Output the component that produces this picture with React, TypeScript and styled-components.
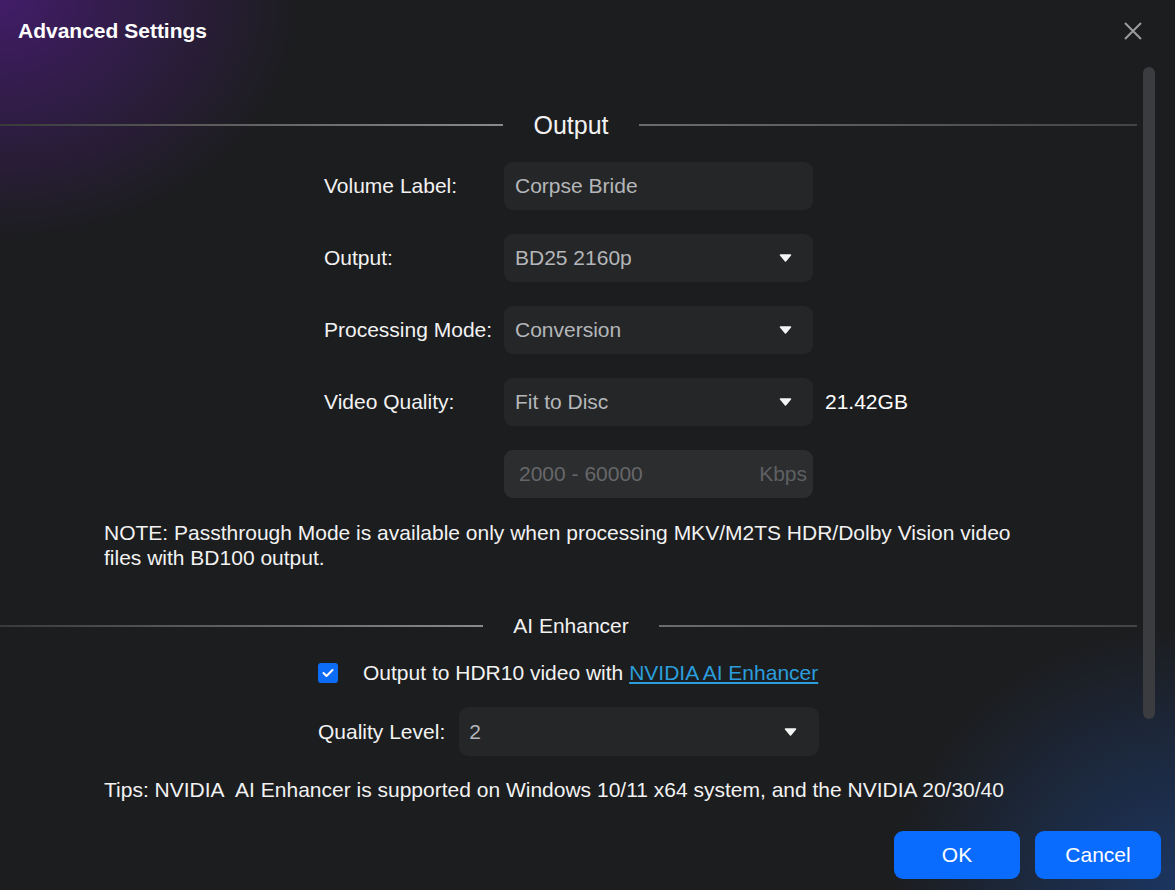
import React from 'react'
import styled, { createGlobalStyle } from 'styled-components'

const GlobalStyle = createGlobalStyle`
  html, body {
    margin: 0;
    padding: 0;
    background: #1c1d1f;
  }
  body {
    font-family: 'Liberation Sans', Arial, sans-serif;
    color: #f2f2f2;
  }
`

const Dialog = styled.div`
  position: relative;
  width: 1175px;
  height: 890px;
  overflow: hidden;
  display: flex;
  flex-direction: column;
  background:
    radial-gradient(ellipse 300px 240px at 0 0, rgba(78, 28, 128, 0.75), rgba(78, 28, 128, 0) 100%),
    radial-gradient(ellipse 280px 260px at 100% 100%, rgba(28, 70, 140, 0.6), rgba(28, 70, 140, 0) 100%),
    #1c1d1f;
`

const Header = styled.div`
  height: 62px;
  flex: none;
  display: flex;
  align-items: center;
  justify-content: space-between;
  padding: 0 30px 0 18px;
`

const Title = styled.h1`
  margin: 0;
  font-size: 21px;
  font-weight: 700;
  color: #ffffff;
`

const CloseButton = styled.button`
  width: 24px;
  height: 24px;
  padding: 0;
  border: 0;
  background: transparent;
  display: flex;
  align-items: center;
  justify-content: center;
  cursor: pointer;
`

const Body = styled.div`
  flex: 1;
  overflow: hidden;
  padding-top: 48px;
  width: 1137px;
  display: flex;
  flex-direction: column;
`

const ScrollThumb = styled.div`
  position: absolute;
  left: 1143px;
  top: 67px;
  width: 12px;
  height: 652px;
  border-radius: 6px;
  background: #3b3c3f;
`

const Divider = styled.div<{ size: number }>`
  display: flex;
  align-items: center;
  gap: 30px;
  height: ${({ size }) => size + 5}px;
  font-size: ${({ size }) => size}px;
  color: #f2f2f2;
  white-space: nowrap;
`

const LineLeft = styled.span`
  flex: 1;
  height: 2px;
  background: linear-gradient(90deg, #3a3a3b, #8a8a8a);
`

const LineRight = styled.span`
  flex: 1;
  height: 2px;
  margin-right: -5px;
  background: linear-gradient(90deg, #6c6c6d, #444446);
`

const Form = styled.div`
  margin: 22px 0 0 324px;
  display: flex;
  flex-direction: column;
  gap: 24px;
`

const Row = styled.div`
  display: grid;
  grid-template-columns: 168px 309px auto;
  column-gap: 12px;
  align-items: center;
  height: 48px;
`

const Label = styled.span`
  font-size: 21px;
  color: #f2f2f2;
  white-space: nowrap;
`

const Field = styled.div<{ disabled?: boolean }>`
  height: 48px;
  box-sizing: border-box;
  border-radius: 9px;
  background: ${({ disabled }) => (disabled ? '#2c2d2f' : '#252628')};
  display: flex;
  align-items: center;
  justify-content: space-between;
  padding: 0 21px 0 11px;
  font-size: 21px;
  color: #b4b6b9;
`

const Placeholder = styled.span`
  margin-left: 4px;
  color: #66676a;
`

const Unit = styled.span`
  color: #5f6063;
  margin-right: -15px;
`

const Extra = styled.span`
  font-size: 21px;
  color: #ffffff;
`

const Arrow = () => (
  <svg width="13" height="8" viewBox="0 0 13 8">
    <path d="M1.5 1h10L6.5 7z" fill="#f4f4f4" stroke="#f4f4f4" strokeWidth="1.5" strokeLinejoin="round" />
  </svg>
)

const Note = styled.p`
  margin: 22px 0 0 104px;
  font-size: 21px;
  line-height: 25px;
  color: #f2f2f2;
`

const AiDivider = styled(Divider)`
  margin-top: 43px;
`

const AiBlock = styled.div`
  margin: 19px 0 0 318px;
  display: flex;
  flex-direction: column;
  gap: 19px;
`

const CheckRow = styled.label`
  display: flex;
  align-items: center;
  gap: 25px;
  height: 30px;
  font-size: 21px;
  color: #f2f2f2;
`

const CheckBox = styled.span`
  width: 20px;
  height: 20px;
  border-radius: 3px;
  background: #0d6cf6;
  display: flex;
  align-items: center;
  justify-content: center;
`

const Link = styled.a`
  color: #2b9ddd;
  text-decoration: underline;
`

const QualityRow = styled.div`
  display: flex;
  align-items: center;
  gap: 14px;
`

const QualitySelect = styled(Field)`
  width: 360px;
  height: 49px;
  padding: 0 22px 0 10px;
`

const Tips = styled.p`
  margin: 21px 0 0 104px;
  font-size: 21px;
  line-height: 25px;
  color: #f2f2f2;
  white-space: nowrap;
`

const Footer = styled.div`
  flex: none;
  display: flex;
  justify-content: flex-end;
  gap: 15px;
  padding: 11px 14px 11px 0;
`

const Button = styled.button`
  width: 126px;
  height: 48px;
  border: 0;
  border-radius: 9px;
  background: #0a6cff;
  color: #ffffff;
  font-family: 'Liberation Sans', Arial, sans-serif;
  font-size: 21px;
  cursor: pointer;
`

const rows = [
  { label: 'Volume Label:', value: 'Corpse Bride', select: false },
  { label: 'Output:', value: 'BD25 2160p', select: true },
  { label: 'Processing Mode:', value: 'Conversion', select: true },
  { label: 'Video Quality:', value: 'Fit to Disc', select: true, extra: '21.42GB' },
]

export default function App() {
  return (
    <>
      <GlobalStyle />
      <Dialog>
        <Header>
          <Title>Advanced Settings</Title>
          <CloseButton aria-label="Close">
            <svg width="20" height="20" viewBox="0 0 20 20">
              <path d="M2 2l16 16M18 2L2 18" stroke="#9c9c9e" strokeWidth="2" />
            </svg>
          </CloseButton>
        </Header>
        <Body>
          <Divider size={25}>
            <LineLeft />
            <span>Output</span>
            <LineRight />
          </Divider>
          <Form>
            {rows.map((r) => (
              <Row key={r.label}>
                <Label>{r.label}</Label>
                <Field>
                  <span>{r.value}</span>
                  {r.select && <Arrow />}
                </Field>
                {r.extra && <Extra>{r.extra}</Extra>}
              </Row>
            ))}
            <Row>
              <span />
              <Field disabled>
                <Placeholder>2000 - 60000</Placeholder>
                <Unit>Kbps</Unit>
              </Field>
            </Row>
          </Form>
          <Note>
            NOTE: Passthrough Mode is available only when processing MKV/M2TS HDR/Dolby Vision video
            <br />
            files with BD100 output.
          </Note>
          <AiDivider size={21}>
            <LineLeft />
            <span>AI Enhancer</span>
            <LineRight />
          </AiDivider>
          <AiBlock>
            <CheckRow>
              <CheckBox>
                <svg width="12" height="10" viewBox="0 0 12 10">
                  <path d="M1.5 5l3 3 6-6" fill="none" stroke="#fff" strokeWidth="2" strokeLinecap="round" strokeLinejoin="round" />
                </svg>
              </CheckBox>
              <span>
                Output to HDR10 video with <Link>NVIDIA AI Enhancer</Link>
              </span>
            </CheckRow>
            <QualityRow>
              <Label>Quality Level:</Label>
              <QualitySelect>
                <span>2</span>
                <Arrow />
              </QualitySelect>
            </QualityRow>
          </AiBlock>
          <Tips>Tips: NVIDIA&nbsp; AI Enhancer is supported on Windows 10/11 x64 system, and the NVIDIA 20/30/40</Tips>
        </Body>
        <ScrollThumb />
        <Footer>
          <Button>OK</Button>
          <Button>Cancel</Button>
        </Footer>
      </Dialog>
    </>
  )
}
